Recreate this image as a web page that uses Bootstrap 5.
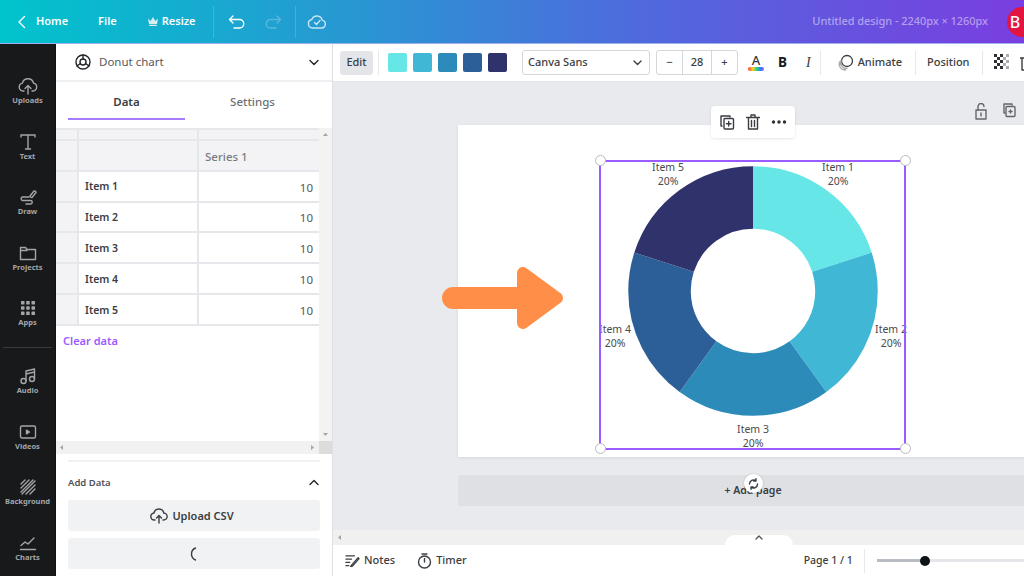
<!DOCTYPE html>
<html lang="en">
<head>
<meta charset="utf-8">
<title>Donut chart editor</title>
<link href="https://cdn.jsdelivr.net/npm/bootstrap@5.3.0/dist/css/bootstrap.min.css" rel="stylesheet">
<style>
html,body{height:100%;overflow:hidden}
body{font-family:"Noto Sans","Liberation Sans",sans-serif;font-size:11px;color:#3a3d42;background:#fff}
svg{display:block;flex:none}
.ic{fill:none;stroke:currentColor;stroke-width:1.4;stroke-linecap:round;stroke-linejoin:round}
.shell{width:1024px;height:576px}
.topbar{height:44px;flex:none;color:#fff;font-weight:600;font-size:11px;background:linear-gradient(90deg,#00c4cc 0%,#2a95d3 36%,#4f6add 62%,#7a3ee0 100%);border-bottom:1px solid #9fb0ee;padding-left:17px}
.tb-home{margin-left:9px;margin-right:30px}
.tb-file{margin-right:31px}
.tb-sep{width:1px;height:32px;background:rgba(255,255,255,.16)}
.tb-sep-a{margin-left:17px;margin-right:14px}
.tb-sep-b{margin-left:13px;margin-right:11px}
.tb-redo{margin-left:18px;opacity:.25}
.tb-title{margin-left:auto;color:rgba(255,255,255,.48);font-weight:500;font-size:11px;margin-right:19px;letter-spacing:-.05px}
.avatar{width:30px;height:30px;flex:none;border-radius:50%;background:#e3143f;font-size:16px;font-weight:500;margin-right:-13px;padding-right:14px}
.work{height:532px;min-height:0}
.rail{width:56px;flex:none;background:#18191b;color:#a3a5a9;padding-top:36px;border-right:1px solid #111}
.rail-item{height:55.6px;flex:none;font-size:7.5px;font-weight:700;line-height:10px}
.rail-item svg{margin-bottom:0;margin-top:-3px}
.rail-sep{height:1px;flex:none;background:#3a3b3e;margin:-11px 3px 22px}
.panel{width:277px;flex:none;background:#fff;border-right:1px solid #dfe0e4}
.pn-head{height:38px;flex:none;border-bottom:2px solid #eff0f2;padding:0 13px 0 19px;font-size:11.5px;color:#555a60}
.pn-tabs{padding:0 12px;gap:9px;height:38px;flex:none;font-size:11.5px;font-weight:500}
.pn-tab{width:117px;color:#6d7177;border-bottom:2px solid transparent;padding-top:4px}
.pn-tab.on{color:#3a3d42;font-weight:600;border-bottom-color:#a77dff}
.pn-gap{height:8px;flex:none}
.sheet{height:313px;flex:none}
.sheet-main{flex:1;min-width:0}
.vbar{width:13px;flex:none;background:#f3f3f4;color:#a5a5a5;padding:4px 0}
.sheet-tb{width:264px;margin:0;table-layout:fixed;border-collapse:collapse;font-size:10.5px}
.sheet-tb td{padding:2px 6px 0;height:30.8px;border:2px solid #e6e7ea;border-left:0;background:#fff;vertical-align:middle}
.sheet-tb td:last-child{border-right:0;text-align:right;color:#55585d;font-size:11.5px;padding-right:7px}
.sheet-tb td.hd{background:#f3f3f5;color:#777b81;text-align:left;font-weight:500}
.sheet-tb tr.mini td{height:11px;padding:0}
.sheet-tb .nm{font-weight:600;color:#3a3d42}
.clear-link{padding:7px 7px;color:#9b5cff;font-weight:600;font-size:11px;line-height:15px}
.hbar{height:13px;flex:none;background:#f1f1f2;color:#a5a5a5;padding-left:3px}
.hbar-end{width:13px;height:13px;background:#dcdcdc}
.add-box{margin:6px 12px 0;border-top:2px solid #f0f1f3;padding-top:14px}
.add-head{font-size:9.5px;font-weight:600;color:#4d5157;margin-bottom:11px;line-height:13px;padding-right:1px}
.add-btn{height:31px;width:100%;background:#f1f2f4;border:0;border-radius:3px;color:#3a3d42;font-size:11px;font-weight:600;padding:1px 4px 0 0;margin-bottom:7px}
.add-btn:hover{background:#f1f2f4;color:#3a3d42}
.main{flex:1;min-width:0;background:#e9eaee}
.tools{height:38px;flex:none;background:#fff;padding-left:7px;border-bottom:1px solid #e4e5e9;font-size:11px;font-weight:500;white-space:nowrap;overflow:hidden;color:#3a3d42}
.t-edit{width:33px;height:24px;flex:none;background:#e3e5e8;border-radius:3px;margin-right:5px;font-size:11px}
.t-sep{width:1px;height:24px;background:#e7e8ea;flex:none}
.t-sep-sw{margin-right:3px}
.t-sep-i{margin-left:9px;margin-right:16px}
.t-sep-p{margin-left:13px;margin-right:11px}
.t-sep-c{margin-left:12px;margin-right:11px}
.sw{width:19px;height:19px;border-radius:2px;margin-left:6px;flex:none}
.font-sel{width:128px;height:25px;border:1px solid #d4d6da;border-radius:3px;padding:0 7px 0 5px;flex:none;margin-left:15px;font-size:11px}
.stepper{width:82px;height:25px;border:1px solid #d4d6da;border-radius:3px;margin-left:6px;flex:none}
.st-b{width:25px}
.st-m{flex:1;height:100%;border-left:1px solid #d4d6da;border-right:1px solid #d4d6da}
.t-color{width:16px;margin-left:10px;font-size:13px;line-height:13px;font-weight:500}
.t-bold{margin-left:14px;font-size:13.5px;font-weight:700;color:#17191c;width:12px}
.t-ital{margin-left:19px;font-size:14px;font-family:"Liberation Serif",serif;font-style:italic;width:10px}
.t-last{margin-left:11px}
.canvas{flex:1;min-height:0;overflow:hidden;padding:43px 0 0 125px}
.board{width:590px;height:332px;background:#fff;box-shadow:0 1px 3px rgba(0,0,0,.08);position:relative}
.add-page{width:590px;height:31px;margin-top:18px;background:#dfe0e4;border-radius:3px;font-size:10.5px;font-weight:600;color:#3a3d42}
.frame{position:absolute;left:141px;top:35px;width:307px;height:289.5px;border:2px solid #9a5cff}
.hd-dot{position:absolute;width:11px;height:11px;border-radius:50%;background:#fff;border:1px solid #b9bbc0}
.donut{position:absolute;left:170px;top:41px}
.lbl{position:absolute;width:60px;text-align:center;font-size:10.5px;line-height:14px;color:#4a4a4e}
.arrow{position:absolute;left:-16px;top:140px}
.rot{position:absolute;left:285.5px;top:349px;width:19px;height:19px;border-radius:50%;background:#fff;box-shadow:0 0 2px rgba(0,0,0,.2)}
.float-bar{position:absolute;left:253px;top:-19px;width:84px;height:32px;background:#fff;border-radius:4px;box-shadow:0 1px 3px rgba(0,0,0,.1);gap:11px}
.corner-ic{position:absolute;top:-22px;color:#62666c}
.can-hbar{height:15px;flex:none;background:#f0f0f1;color:#a5a5a5;padding-left:4px;position:relative}
.notch{position:absolute;left:392px;top:5px;width:68px;height:10px;background:#fff;border-radius:10px 10px 0 0;color:#555}
.footbar{height:31px;flex:none;background:#fff;padding-left:12px;font-size:11px;font-weight:500;white-space:nowrap;overflow:hidden}
.f-timer{margin-left:22px}
.f-page{margin-left:337px;font-size:10.5px}
.f-sep{margin-left:11px;margin-right:12px}
.slider-tr{width:147px;height:3px;flex:none;background:linear-gradient(90deg,#b9bcc2 0 48px,#e5e6e9 48px);position:relative}
.slider-kn{position:absolute;left:43px;top:-3.5px;width:10px;height:10px;border-radius:50%;background:#0e1318}
</style>
</head>
<body>
<div class="shell d-flex flex-column">
  <div class="topbar d-flex align-items-center">
    <svg class="ic" width="10" height="14" viewBox="0 0 10 14" stroke-width="1.6"><path d="M7.5 1.5 2 7l5.5 5.5"/></svg>
    <span class="tb-home">Home</span>
    <span class="tb-file">File</span>
    <svg width="10" height="9" viewBox="0 0 10 9" fill="#d6eef4" class="me-1"><path d="M0 1.5 2.6 4 5 0l2.4 4L10 1.5 9 7H1zM1.2 7.7h7.6V9H1.2z"/></svg>
    <span>Resize</span>
    <span class="tb-sep tb-sep-a"></span>
    <svg class="ic" width="18" height="14" viewBox="0 0 18 14"><path d="M5 1 1.5 4.5 5 8M2 4.5h9.5a4 4 0 0 1 0 8.5H6"/></svg>
    <svg class="ic tb-redo" width="18" height="14" viewBox="0 0 18 14"><path d="M13 1l3.500 3.500L13 8M16 4.500H6.500a4 4 0 0 0 0 8.500H12"/></svg>
    <span class="tb-sep tb-sep-b"></span>
    <svg class="ic opacity-75" width="20" height="15" viewBox="0 0 20 15"><path d="M5.500 14h9a4 4 0 0 0 .7-7.900A5.500 5.500 0 0 0 4.800 5.500 4.300 4.300 0 0 0 5.500 14zM7.500 8.500l2 2 3.500-4"/></svg>
    <span class="tb-title">Untitled design - 2240px × 1260px</span>
    <span class="avatar d-flex align-items-center justify-content-center">B</span>
  </div>
  <div class="work d-flex">
    <nav class="rail d-flex flex-column">
      <div class="rail-item d-flex flex-column align-items-center"><svg class="ic" width="20" height="18" viewBox="0 0 20 18"><path d="M6 14H5a4 4 0 0 1-.6-7.900 5.700 5.700 0 0 1 11.100 0A4 4 0 0 1 15 14h-1M10 17V9M7 11.500 10 8.500l3 3"/></svg>Uploads</div>
      <div class="rail-item d-flex flex-column align-items-center"><svg class="ic" width="18" height="18" viewBox="0 0 18 18" stroke-width="1.2"><path d="M2 4V2h14v2M9 2v14M6.500 16h5"/></svg>Text</div>
      <div class="rail-item d-flex flex-column align-items-center"><svg class="ic" width="18" height="18" viewBox="0 0 18 18"><path d="M11 8l4-5a1.500 1.500 0 0 1 2 1.500L13 9.500a1.800 1.800 0 0 1-2-1.500zM10 9H3.500a1.800 1.800 0 0 0 0 3.500h8a1.700 1.700 0 0 1 0 3.500H7"/></svg>Draw</div>
      <div class="rail-item d-flex flex-column align-items-center"><svg class="ic" width="18" height="18" viewBox="0 0 18 18"><path d="M1.500 3.500h5l1.500 2h8.500v10h-15zM1.500 6.500H8"/></svg>Projects</div>
      <div class="rail-item d-flex flex-column align-items-center"><svg width="18" height="18" viewBox="0 0 18 18" fill="currentColor"><rect x="2" y="2" width="3.500" height="3.500" rx=".6"/><rect x="7.200" y="2" width="3.500" height="3.500" rx=".6"/><rect x="12.500" y="2" width="3.500" height="3.500" rx=".6"/><rect x="2" y="7.200" width="3.500" height="3.500" rx=".6"/><rect x="7.200" y="7.200" width="3.500" height="3.500" rx=".6"/><rect x="12.500" y="7.200" width="3.500" height="3.500" rx=".6"/><rect x="2" y="12.500" width="3.500" height="3.500" rx=".6"/><rect x="7.200" y="12.500" width="3.500" height="3.500" rx=".6"/><rect x="12.500" y="12.500" width="3.500" height="3.500" rx=".6"/></svg>Apps</div>
      <div class="rail-sep"></div>
      <div class="rail-item d-flex flex-column align-items-center"><svg class="ic" width="18" height="18" viewBox="0 0 18 18"><circle cx="4.500" cy="14" r="2.500"/><circle cx="13" cy="12" r="2.500"/><path d="M7 14V4l8.500-2v10M7 7l8.500-2"/></svg>Audio</div>
      <div class="rail-item d-flex flex-column align-items-center"><svg class="ic" width="18" height="18" viewBox="0 0 18 18"><rect x="1.500" y="3" width="15" height="12" rx="1.500"/><path d="M7.500 7.200v3.600L10.500 9z" fill="currentColor"/></svg>Videos</div>
      <div class="rail-item d-flex flex-column align-items-center"><svg class="ic" width="18" height="18" viewBox="0 0 18 18" stroke-width="1.200"><path d="M2 6l4-4M2 10l8-8M2 14 14 2M3 16 16 3M7 16l9-9M11 16l5-5"/></svg>Background</div>
      <div class="rail-item d-flex flex-column align-items-center"><svg class="ic" width="18" height="18" viewBox="0 0 18 18"><path d="M1.500 15.500h15M2 11.500l4-3.500 3 2 6-6"/></svg>Charts</div>
    </nav>

    <aside class="panel d-flex flex-column">
      <div class="pn-head d-flex align-items-center">
        <svg class="ic me-2 text-dark" width="16" height="16" viewBox="0 0 16 16"><circle cx="8" cy="8" r="7"/><circle cx="8" cy="8" r="3"/><path d="M8 1v4M5.400 9.500 2 12M10.600 9.500 14 12"/></svg>
        <span>Donut chart</span>
        <svg class="ic ms-auto text-dark" width="10" height="7" viewBox="0 0 10 7" stroke-width="1.500"><path d="M1 1.500l4 4 4-4"/></svg>
      </div>
      <div class="pn-tabs d-flex">
        <div class="pn-tab on d-flex align-items-center justify-content-center">Data</div>
        <div class="pn-tab d-flex align-items-center justify-content-center">Settings</div>
      </div>
      <div class="pn-gap"></div>
      <div class="sheet d-flex">
        <div class="sheet-main">
          <table class="sheet-tb">
            <colgroup><col style="width:22px"><col style="width:120px"><col></colgroup>
            <tr class="mini"><td class="hd"></td><td class="hd"></td><td class="hd"></td></tr>
            <tr><td class="hd"></td><td class="hd"></td><td class="hd">Series 1</td></tr>
            <tr><td class="hd"></td><td class="nm">Item 1</td><td>10</td></tr>
            <tr><td class="hd"></td><td class="nm">Item 2</td><td>10</td></tr>
            <tr><td class="hd"></td><td class="nm">Item 3</td><td>10</td></tr>
            <tr><td class="hd"></td><td class="nm">Item 4</td><td>10</td></tr>
            <tr><td class="hd"></td><td class="nm">Item 5</td><td>10</td></tr>
          </table>
          <div class="clear-link">Clear data</div>
        </div>
        <div class="vbar d-flex flex-column justify-content-between align-items-center">
          <svg width="7" height="5" viewBox="0 0 7 5" fill="currentColor"><path d="M3.500 1 6 4H1z"/></svg>
          <svg width="7" height="5" viewBox="0 0 7 5" fill="currentColor"><path d="M3.500 4 6 1H1z"/></svg>
        </div>
      </div>
      <div class="hbar d-flex align-items-center">
        <svg width="5" height="7" viewBox="0 0 5 7" fill="currentColor"><path d="M1 3.500 4 1v5z"/></svg>
        <svg class="ms-auto me-1" width="5" height="7" viewBox="0 0 5 7" fill="currentColor"><path d="M4 3.500 1 1v5z"/></svg>
        <span class="hbar-end"></span>
      </div>
      <div class="add-box">
        <div class="add-head d-flex align-items-center justify-content-between">Add Data
          <svg class="ic text-dark" width="10" height="7" viewBox="0 0 10 7" stroke-width="1.500"><path d="M1 5.500l4-4 4 4"/></svg>
        </div>
        <button class="btn add-btn d-flex align-items-center justify-content-center gap-1">
          <svg class="ic" width="18" height="16" viewBox="0 0 18 16"><path d="M5 12H4.500a3.500 3.500 0 0 1-.5-7 5 5 0 0 1 9.800 0 3.500 3.500 0 0 1-.3 7H13M9 15V8M6.500 10 9 7.500l2.500 2.500"/></svg>
          Upload CSV
        </button>
        <button class="btn add-btn d-flex align-items-center justify-content-center" aria-label="Loading">
          <svg class="ic" width="12" height="14" viewBox="0 0 12 14" stroke-width="1.500"><path d="M9.500 1a6.500 6.500 0 0 0 0 12"/></svg>
        </button>
      </div>
    </aside>

    <main class="main d-flex flex-column">
      <div class="tools d-flex align-items-center">
        <div class="t-edit d-flex align-items-center justify-content-center">Edit</div>
        <span class="t-sep t-sep-sw"></span>
        <span class="sw" style="background:#67e6e8"></span>
        <span class="sw" style="background:#40b7d5"></span>
        <span class="sw" style="background:#2c8bb9"></span>
        <span class="sw" style="background:#2c5f97"></span>
        <span class="sw" style="background:#30336b"></span>
        <div class="font-sel d-flex align-items-center justify-content-between">Canva Sans
          <svg class="ic" width="9" height="6" viewBox="0 0 9 6" stroke-width="1.300"><path d="M1 1l3.500 3.500L8 1"/></svg>
        </div>
        <div class="stepper d-flex align-items-center text-center">
          <span class="st-b">−</span>
          <span class="st-m d-flex align-items-center justify-content-center">28</span>
          <span class="st-b">+</span>
        </div>
        <div class="t-color d-flex flex-column align-items-center">A
          <svg width="16" height="4" viewBox="0 0 16 4"><defs><linearGradient id="rb"><stop offset="0" stop-color="#ff3b3b"/><stop offset=".3" stop-color="#ffd02b"/><stop offset=".55" stop-color="#29d17c"/><stop offset=".8" stop-color="#2b7fff"/><stop offset="1" stop-color="#c44bff"/></linearGradient></defs><rect width="16" height="4" rx="2" fill="url(#rb)"/></svg>
        </div>
        <span class="t-bold">B</span>
        <span class="t-ital">I</span>
        <span class="t-sep t-sep-i"></span>
        <svg class="ic me-1" width="17" height="17" viewBox="0 0 17 17" stroke-width="1"><circle cx="10" cy="7" r="5.500" stroke-width="1.300"/><path d="M4 6.500a6 6 0 0 0 6 8M2.500 8a6 6 0 0 0 6 8" stroke="#aaa"/></svg>
        <span>Animate</span>
        <span class="t-sep t-sep-p"></span>
        <span>Position</span>
        <span class="t-sep t-sep-c"></span>
        <svg width="15" height="17" viewBox="0 0 15 17" fill="#2d2f33"><path d="M0 0h3v3H0zM6 0h3v3H6zM3 3h3v3H3zM0 6h3v3H0zM6 6h3v3H6zM3 9h3v3H3zM0 12h3v3H0zM6 12h3v3H6z"/><path fill="#a9abae" d="M9 3h3v3H9zM12 0h3v3h-3zM9 9h3v3H9zM12 6h3v3h-3zM12 12h3v3h-3z"/></svg>
        <svg class="ic t-last" width="14" height="16" viewBox="0 0 14 16"><path d="M2 3v12h10V3M0 3h14M5 3V1h4v2"/></svg>
      </div>
      <div class="canvas">
        <div class="board">
          <svg class="arrow" width="124" height="68" viewBox="0 0 124 68" aria-hidden="true">
            <path d="M11 33H90" stroke="#ff8f48" stroke-width="22" stroke-linecap="round"/>
            <path d="M81 8V58L115 33Z" fill="#ff8f48" stroke="#ff8f48" stroke-width="12" stroke-linejoin="round"/>
          </svg>
          <svg class="donut" width="250" height="250" viewBox="0 0 250 250" aria-hidden="true">
            <g transform="rotate(-90 125 125)" fill="none" stroke-width="62.500">
              <circle cx="125" cy="125" r="93.500" pathLength="5" stroke="#67e6e8" stroke-dasharray="1 4"/>
              <circle cx="125" cy="125" r="93.500" pathLength="5" stroke="#40b7d5" stroke-dasharray="1 4" stroke-dashoffset="-1"/>
              <circle cx="125" cy="125" r="93.500" pathLength="5" stroke="#2c8bb9" stroke-dasharray="1 4" stroke-dashoffset="-2"/>
              <circle cx="125" cy="125" r="93.500" pathLength="5" stroke="#2c5f97" stroke-dasharray="1 4" stroke-dashoffset="-3"/>
              <circle cx="125" cy="125" r="93.500" pathLength="5" stroke="#30336b" stroke-dasharray="1 4" stroke-dashoffset="-4"/>
            </g>
          </svg>
          <div class="lbl" style="left:350px;top:35px">Item 1<br>20%</div>
          <div class="lbl" style="left:403px;top:197px">Item 2<br>20%</div>
          <div class="lbl" style="left:265px;top:297px">Item 3<br>20%</div>
          <div class="lbl" style="left:127px;top:197px">Item 4<br>20%</div>
          <div class="lbl" style="left:180px;top:35px">Item 5<br>20%</div>
          <div class="frame"></div>
          <span class="hd-dot" style="left:136.500px;top:30px"></span>
          <span class="hd-dot" style="left:442px;top:30px"></span>
          <span class="hd-dot" style="left:136.500px;top:318px"></span>
          <span class="hd-dot" style="left:442px;top:318px"></span>
          <div class="rot d-flex align-items-center justify-content-center">
            <svg class="ic" width="11" height="12" viewBox="0 0 11 12" stroke-width="1.100"><path d="M1.500 6a4 4 0 0 1 6.500-3.200M9.500 6A4 4 0 0 1 3 9.200M8 .7v2.300H5.700M3 11.300V9h2.300"/></svg>
          </div>
          <div class="float-bar d-flex align-items-center justify-content-center">
            <svg class="ic" width="16" height="16" viewBox="0 0 16 16"><path d="M3 12H2V2h9v1"/><rect x="5" y="4.500" width="9.500" height="10.500" rx="1"/><path d="M9.700 7.500v4.500M7.500 9.700h4.500"/></svg>
            <svg class="ic" width="14" height="16" viewBox="0 0 14 16"><path d="M2.500 3.500V15h9V3.500M.5 3.500h13M5 3V1h4v2M5.500 6.500v6M8.500 6.500v6"/></svg>
            <svg width="16" height="4" viewBox="0 0 16 4" fill="#2d2f33"><circle cx="2.500" cy="2" r="1.700"/><circle cx="8" cy="2" r="1.700"/><circle cx="13.500" cy="2" r="1.700"/></svg>
          </div>
          <svg class="ic corner-ic" style="left:517px" width="12" height="17" viewBox="0 0 12 17" stroke-width="1.100"><rect x="1" y="7" width="10" height="9"/><path d="M3 7V3.500a3 3 0 0 1 6 0M6 10v3"/></svg>
          <svg class="ic corner-ic" style="left:545px" width="13" height="15" viewBox="0 0 13 15" stroke-width="1.100"><path d="M2 10H1V1h8v1"/><rect x="3" y="3.500" width="9" height="10" rx="1"/><path d="M7.500 7v3M6 8.500h3"/></svg>
        </div>
        <div class="add-page d-flex align-items-center justify-content-center">+ Add page</div>
      </div>
      <div class="can-hbar d-flex align-items-center">
        <svg width="5" height="7" viewBox="0 0 5 7" fill="currentColor"><path d="M1 3.500 4 1v5z"/></svg>
        <div class="notch d-flex justify-content-center">
          <svg class="ic" width="8" height="5" viewBox="0 0 8 5"><path d="M1 4l3-3 3 3"/></svg>
        </div>
      </div>
      <div class="footbar d-flex align-items-center">
        <svg class="ic me-1" width="15" height="13" viewBox="0 0 16 13" stroke-width="1.200"><path d="M1 1.500h9M1 5h6M1 8.500h4M1 12h3M7 11.500l7-8 1 1-7 8-2 .5z"/></svg>
        <span>Notes</span>
        <svg class="ic me-1 f-timer" width="15" height="16" viewBox="0 0 15 16"><circle cx="7.500" cy="9" r="6"/><path d="M5 1h5M7.500 5.500V9"/></svg>
        <span>Timer</span>
        <span class="f-page">Page 1 / 1</span>
        <span class="t-sep f-sep"></span>
        <div class="slider-tr"><span class="slider-kn"></span></div>
      </div>
    </main>
  </div>
</div>
<script src="https://cdn.jsdelivr.net/npm/bootstrap@5.3.0/dist/js/bootstrap.bundle.min.js"></script>
</body>
</html>
